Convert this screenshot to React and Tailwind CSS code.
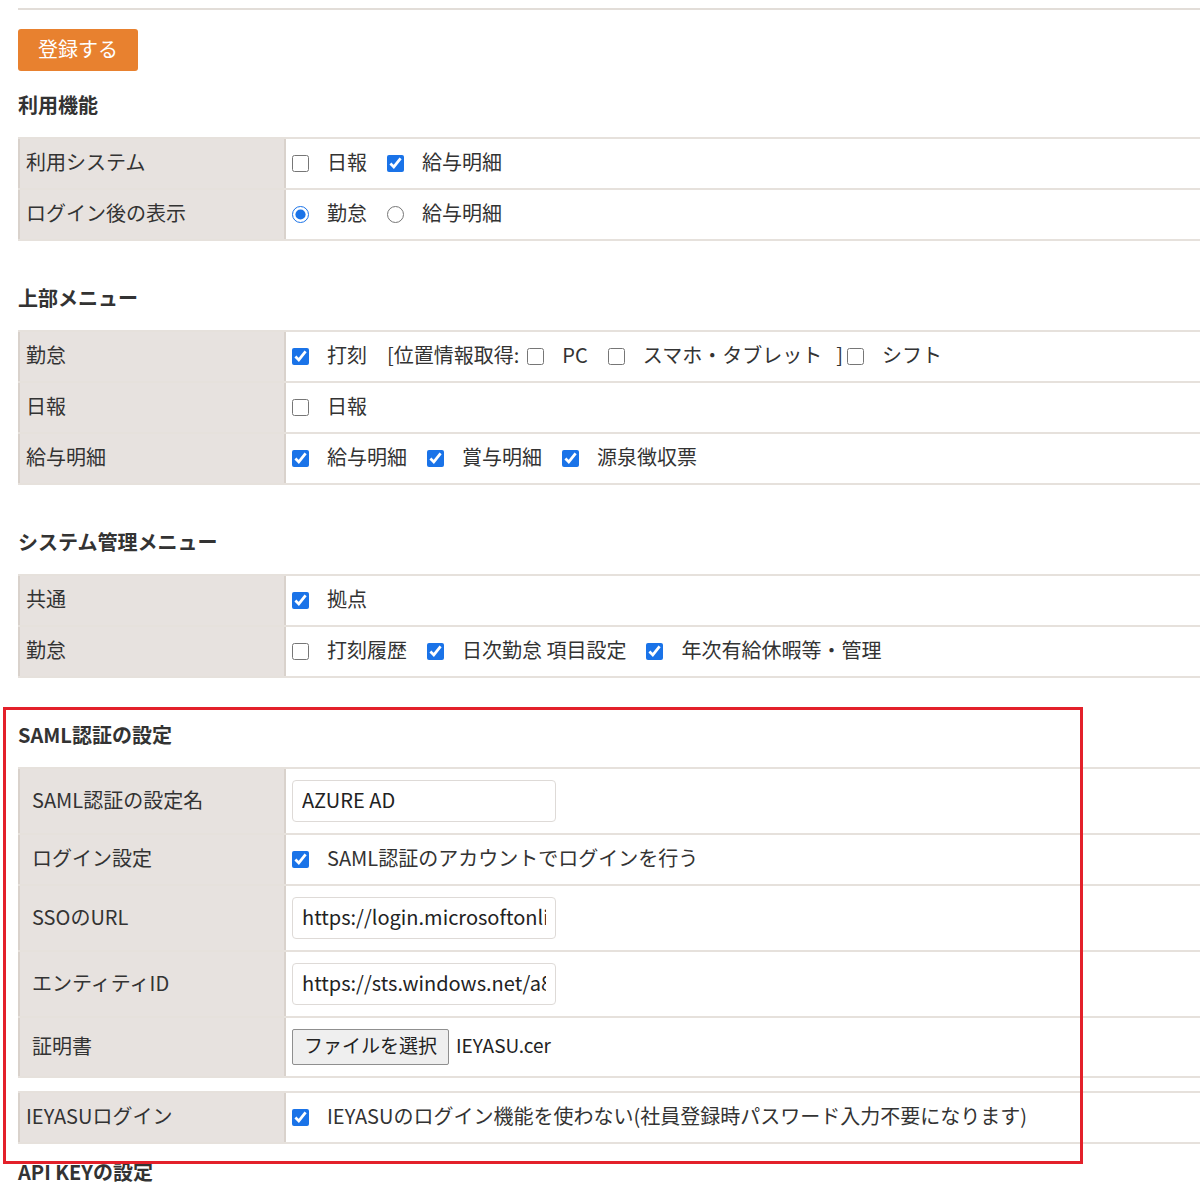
import React from "react";

const Check = ({ checked }) => (
  <input
    type="checkbox"
    defaultChecked={checked}
    className="w-[17px] h-[17px] m-0 mr-[18px] shrink-0 accent-[#1a73e8]"
  />
);

const Radio = ({ checked }) => (
  <input
    type="radio"
    name="after-login"
    defaultChecked={checked}
    className="w-[17px] h-[17px] m-0 mr-[18px] shrink-0 accent-[#1a73e8]"
  />
);

const Item = ({ checked, children, last }) => (
  <span className={last ? "inline-flex items-center" : "inline-flex items-center mr-[20px]"}>
    <Check checked={checked} />
    <span className="pb-[3px]">{children}</span>
  </span>
);

const Row = ({ label, children, h = "h-[49px]", pl = "pl-[6px]" }) => (
  <div className="flex border-b-2 border-[#e6e1dc]">
    <div
      className={`${h} w-[268px] shrink-0 bg-[#e7e2df] border-x-2 border-[#d9d2cc] flex items-center pb-[3px] ${pl}`}
    >
      {label}
    </div>
    <div className="flex-1 flex items-center pl-[6px] pb-[1px] whitespace-nowrap">{children}</div>
  </div>
);

const Table = ({ children, className = "" }) => (
  <div className={`border-t-2 border-[#e6e1dc] ${className}`}>{children}</div>
);

const Heading = ({ children, className = "" }) => (
  <h2 className={`h-[28px] leading-[26px] text-[20px] font-bold text-[#333] ${className}`}>{children}</h2>
);

const TextInput = ({ value }) => (
  <input
    type="text"
    defaultValue={value}
    readOnly
    className="w-[264px] h-[42px] px-[9px] pb-[3px] border border-[#dedad7] rounded-[4px] text-[20px] text-[#222] bg-white outline-none"
  />
);

export default function App() {
  return (
    <div className="relative min-h-[1202px] bg-white pt-[8px] pl-[18px] overflow-hidden text-[20px] text-[#333] font-['Noto_Sans_CJK_JP','Noto_Sans',sans-serif]">
      <div className="border-t-2 border-[#e2ddd8]" />

      <button className="mt-[19px] w-[120px] h-[42px] pb-[3px] rounded-[3px] bg-[#e8812f] text-white text-[20px]">
        登録する
      </button>

      <Heading className="mt-[21px] mb-[17px]">利用機能</Heading>
      <Table>
        <Row label="利用システム">
          <Item>日報</Item>
          <Item checked last>給与明細</Item>
        </Row>
        <Row label="ログイン後の表示">
          <span className="inline-flex items-center mr-[20px]">
            <Radio checked />
            <span className="pb-[3px]">勤怠</span>
          </span>
          <span className="inline-flex items-center">
            <Radio />
            <span className="pb-[3px]">給与明細</span>
          </span>
        </Row>
      </Table>

      <Heading className="mt-[44px] mb-[17px]">上部メニュー</Heading>
      <Table>
        <Row label="勤怠">
          <Item checked>打刻</Item>
          <span className="mr-[8px] pb-[3px]">[位置情報取得:</span>
          <Item>PC</Item>
          <Item>スマホ・タブレット</Item>
          <span className="ml-[-6px] mr-[4px] pb-[3px]">]</span>
          <Item last>シフト</Item>
        </Row>
        <Row label="日報">
          <Item last>日報</Item>
        </Row>
        <Row label="給与明細">
          <Item checked>給与明細</Item>
          <Item checked>賞与明細</Item>
          <Item checked last>源泉徴収票</Item>
        </Row>
      </Table>

      <Heading className="mt-[44px] mb-[17px]">システム管理メニュー</Heading>
      <Table>
        <Row label="共通">
          <Item checked last>拠点</Item>
        </Row>
        <Row label="勤怠">
          <Item>打刻履歴</Item>
          <Item checked>日次勤怠 項目設定</Item>
          <Item checked last>年次有給休暇等・管理</Item>
        </Row>
      </Table>

      <Heading className="mt-[44px] mb-[17px]">SAML認証の設定</Heading>
      <Table>
        <Row label="SAML認証の設定名" h="h-[64px]" pl="pl-[12px]">
          <TextInput value="AZURE AD" />
        </Row>
        <Row label="ログイン設定" pl="pl-[12px]">
          <Item checked last>SAML認証のアカウントでログインを行う</Item>
        </Row>
        <Row label="SSOのURL" h="h-[64px]" pl="pl-[12px]">
          <TextInput value="https://login.microsoftonline.com/a8f1c2d4/saml2" />
        </Row>
        <Row label="エンティティID" h="h-[64px]" pl="pl-[12px]">
          <TextInput value="https://sts.windows.net/a8f1c2d4/" />
        </Row>
        <Row label="証明書" h="h-[58px]" pl="pl-[12px]">
          <button className="h-[36px] px-[11px] pb-[3px] bg-[#efefef] border border-[#8f8f8f] rounded-[2px] text-[19px] text-[#222]">
            ファイルを選択
          </button>
          <span className="ml-[7px] pb-[3px] text-[19px] text-[#222]">IEYASU.cer</span>
        </Row>
      </Table>

      <Table className="mt-[13px]">
        <Row label="IEYASUログイン">
          <Item checked last>IEYASUのログイン機能を使わない(社員登録時パスワード入力不要になります)</Item>
        </Row>
      </Table>

      <Heading className="mt-[15px]">API KEYの設定</Heading>

      <div className="absolute left-[3px] top-[707px] w-[1080px] h-[457px] border-[3px] border-[#e3202a] pointer-events-none" />
    </div>
  );
}
